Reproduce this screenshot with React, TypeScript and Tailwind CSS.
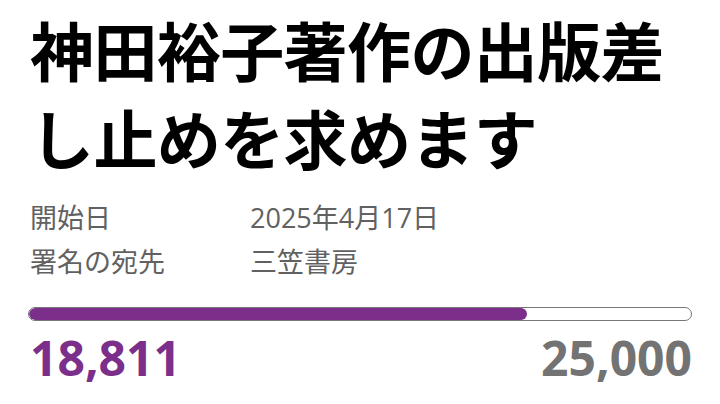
export default function App() {
  const signed = 18811
  const goal = 25000
  const pct = (signed / goal) * 100

  return (
    <div className="h-[404px] w-[720px] overflow-hidden bg-white px-[28px] pt-[4px]">
      <h1
        className="pl-[2px] text-[64px] font-bold leading-[88px] tracking-[-0.6px] text-black"
        style={{ fontFamily: '"Noto Sans CJK JP", sans-serif' }}
      >
        神田裕子著作の出版差し止めを求めます
      </h1>

      <dl
        className="mt-[16px] grid grid-cols-[220px_1fr] pl-[2px] text-[27px] leading-[44px] text-[#616161]"
        style={{ fontFamily: '"Open Sans", "Noto Sans CJK JP", sans-serif' }}
      >
        <dt>開始日</dt>
        <dd>2025年4月17日</dd>
        <dt>署名の宛先</dt>
        <dd>三笠書房</dd>
      </dl>

      <div className="mt-[23px] h-[14px] w-full overflow-hidden rounded-full border border-[#777] bg-white">
        <div className="h-full rounded-full bg-[#7b2f8b]" style={{ width: `${pct}%` }} />
      </div>

      <div
        className="mt-[13px] flex items-center justify-between pl-[2px] text-[48px] font-bold leading-[48px]"
        style={{ fontFamily: '"Open Sans", sans-serif' }}
      >
        <span className="text-[#7b2f8b]">18,811</span>
        <span className="text-[#737373]">25,000</span>
      </div>
    </div>
  )
}
